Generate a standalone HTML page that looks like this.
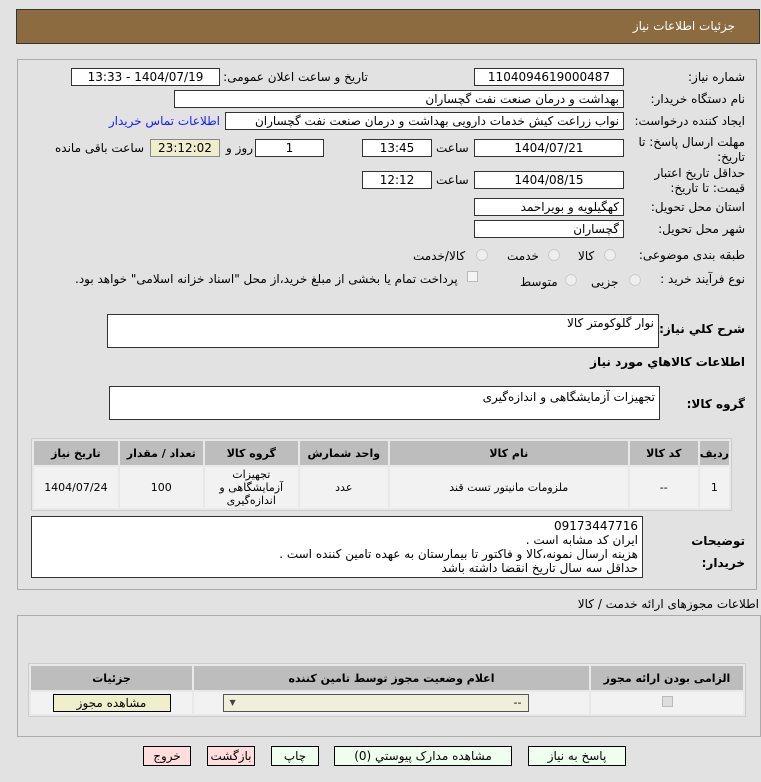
<!DOCTYPE html>
<html><head><meta charset="utf-8"><style>
*{box-sizing:border-box;margin:0;padding:0}
body{width:761px;height:782px;background:#e2e2e2;font-family:"DejaVu Sans","Liberation Sans",sans-serif;font-size:12px;color:#000;position:relative;overflow:hidden}
.a{position:absolute;white-space:nowrap}
.in{position:absolute;background:#fff;border:1px solid #333;height:18px;line-height:16px;direction:rtl;padding:0 4px;font-size:12px}
.c{text-align:center}
.l{direction:rtl;text-align:right}
.panel{position:absolute;border:1px solid #aaa;background:#e2e2e2}
table{border-collapse:separate;border-spacing:2px;position:absolute;background:#e8e8e8;border:1px solid #ccc}
th{background:#bdbdbd;font-weight:bold;height:24px;font-size:11px}
td{background:#f2f2f2;text-align:center;font-size:11px}
.btn{position:absolute;height:20px;border:1px solid #000;text-align:center;line-height:18px;font-size:12px}
.radio{position:absolute;width:12px;height:12px;border-radius:50%;border:1px solid #ccc;background:#eee}
</style></head><body>
<div class="a" style="left:16px;top:9px;width:744px;height:35px;background:#8b6b3f;border:1px solid #333"></div>
<div class="a" style="right:26px;top:19px;color:#fff;font-size:12px">جزئیات اطلاعات نیاز</div>

<div class="panel" style="left:17px;top:59px;width:740px;height:531px"></div>

<div class="a l" style="right:16px;top:70px">شماره نیاز:</div>
<div class="in c" style="left:474px;top:68px;width:150px">1104094619000487</div>
<div class="a l" style="right:393px;top:70px">تاریخ و ساعت اعلان عمومی:</div>
<div class="in c" style="left:71px;top:68px;width:149px">1404/07/19 - 13:33</div>

<div class="a l" style="right:16px;top:92px">نام دستگاه خریدار:</div>
<div class="in" style="left:174px;top:90px;width:450px">بهداشت و درمان صنعت نفت گچساران</div>

<div class="a l" style="right:16px;top:114px">ایجاد کننده درخواست:</div>
<div class="in" style="left:225px;top:112px;width:399px">نواب زراعت کیش خدمات دارویی بهداشت و درمان صنعت نفت گچساران</div>
<div class="a l" style="right:541px;top:114px;color:#1a1aff">اطلاعات تماس خریدار</div>

<div class="a l" style="right:16px;top:135px;line-height:15px">مهلت ارسال پاسخ: تا<br>تاریخ:</div>
<div class="in c" style="left:474px;top:139px;width:150px">1404/07/21</div>
<div class="a" style="left:436px;top:141px">ساعت</div>
<div class="in c" style="left:362px;top:139px;width:70px">13:45</div>
<div class="in c" style="left:255px;top:139px;width:69px">1</div>
<div class="a" style="left:226px;top:141px">روز و</div>
<div class="in c" style="left:150px;top:139px;width:70px;background:#eeeecc;border-color:#888">23:12:02</div>
<div class="a" style="left:55px;top:141px">ساعت باقی مانده</div>

<div class="a l" style="right:16px;top:166px;line-height:15px">حداقل تاریخ اعتبار<br>قیمت: تا تاریخ:</div>
<div class="in c" style="left:474px;top:171px;width:150px">1404/08/15</div>
<div class="a" style="left:436px;top:173px">ساعت</div>
<div class="in c" style="left:362px;top:171px;width:70px">12:12</div>

<div class="a l" style="right:16px;top:200px">استان محل تحویل:</div>
<div class="in" style="left:474px;top:198px;width:150px">کهگیلویه و بویراحمد</div>
<div class="a l" style="right:16px;top:222px">شهر محل تحویل:</div>
<div class="in" style="left:474px;top:220px;width:150px">گچساران</div>

<div class="a l" style="right:16px;top:248px">طبقه بندی موضوعی:</div>
<div class="radio" style="left:604px;top:249px"></div><div class="a" style="left:578px;top:249px">کالا</div>
<div class="radio" style="left:548px;top:249px"></div><div class="a" style="left:507px;top:249px">خدمت</div>
<div class="radio" style="left:476px;top:249px"></div><div class="a" style="left:413px;top:249px">کالا/خدمت</div>

<div class="a l" style="right:16px;top:272px">نوع فرآیند خرید :</div>
<div class="radio" style="left:629px;top:274px"></div><div class="a" style="left:591px;top:275px">جزیی</div>
<div class="radio" style="left:565px;top:274px"></div><div class="a" style="left:520px;top:275px">متوسط</div>
<div class="a" style="left:467px;top:271px;width:11px;height:11px;border:1px solid #bbb;background:#f4f4f4"></div>
<div class="a l" style="left:75px;top:272px">پرداخت تمام یا بخشی از مبلغ خرید،از محل "اسناد خزانه اسلامی" خواهد بود.</div>

<div class="a l" style="right:16px;top:322px;font-weight:bold">شرح کلي نياز:</div>
<div class="in" style="left:107px;top:314px;width:552px;height:34px">نوار گلوکومتر کالا</div>
<div class="a l" style="right:16px;top:355px;font-weight:bold">اطلاعات کالاهاي مورد نياز</div>
<div class="a l" style="right:16px;top:397px;font-weight:bold">گروه کالا:</div>
<div class="in" style="left:109px;top:386px;width:551px;height:34px;padding-top:2px">تجهیزات آزمایشگاهی و اندازه‌گیری</div>

<table style="left:31px;top:438px;width:701px;direction:rtl">
<tr><th style="width:25px">ردیف</th><th style="width:68px">کد کالا</th><th style="width:238px">نام کالا</th><th style="width:88px">واحد شمارش</th><th style="width:93px">گروه کالا</th><th style="width:83px">تعداد / مقدار</th><th>تاریخ نیاز</th></tr>
<tr style="height:41px"><td>1</td><td>--</td><td>ملزومات مانیتور تست قند</td><td>عدد</td><td style="line-height:13px">تجهیزات<br>آزمایشگاهی و<br>اندازه‌گیری</td><td>100</td><td>1404/07/24</td></tr>
</table>

<div class="a l" style="right:16px;top:530px;font-weight:bold;line-height:22px">توضیحات<br>خریدار:</div>
<div class="in" style="left:31px;top:516px;width:612px;height:62px;line-height:14px;overflow:hidden;padding-top:2px">09173447716<br>ایران کد مشابه است .<br>هزینه ارسال نمونه،کالا و فاکتور تا بیمارستان به عهده تامین کننده است .<br>حداقل سه سال تاریخ انقضا داشته باشد</div>

<div class="a l" style="right:2px;top:597px">اطلاعات مجوزهای ارائه خدمت / کالا</div>
<div class="panel" style="left:17px;top:615px;width:744px;height:122px"></div>
<table style="left:28px;top:663px;width:718px;direction:rtl">
<tr><th style="width:152px">الزامی بودن ارائه مجوز</th><th style="width:395px">اعلام وضعیت مجوز توسط تامین کننده</th><th>جزئیات</th></tr>
<tr style="height:22px"><td><span style="display:inline-block;width:11px;height:11px;background:#ddd;border:1px solid #bbb"></span></td><td><div style="margin:0 auto 0 auto;position:relative;left:-16px;width:306px;height:18px;background:#efefdc;border:1px solid #555;text-align:right;padding:0 6px;line-height:16px">--<span style="float:left;font-size:8px;color:#444">▼</span></div></td><td><div style="margin:0 auto;width:118px;height:18px;background:#efefcc;border:1px solid #000;line-height:16px;font-size:12px">مشاهده مجوز</div></td></tr>
</table>

<div class="btn" style="left:528px;top:746px;width:98px;background:#eeffee">پاسخ به نیاز</div>
<div class="btn" style="left:334px;top:746px;width:178px;background:#eeffee">مشاهده مدارک پیوستي (0)</div>
<div class="btn" style="left:271px;top:746px;width:48px;background:#eeffee">چاپ</div>
<div class="btn" style="left:207px;top:746px;width:48px;background:#ffdddd">بازگشت</div>
<div class="btn" style="left:143px;top:746px;width:48px;background:#ffdddd">خروج</div>
</body></html>
